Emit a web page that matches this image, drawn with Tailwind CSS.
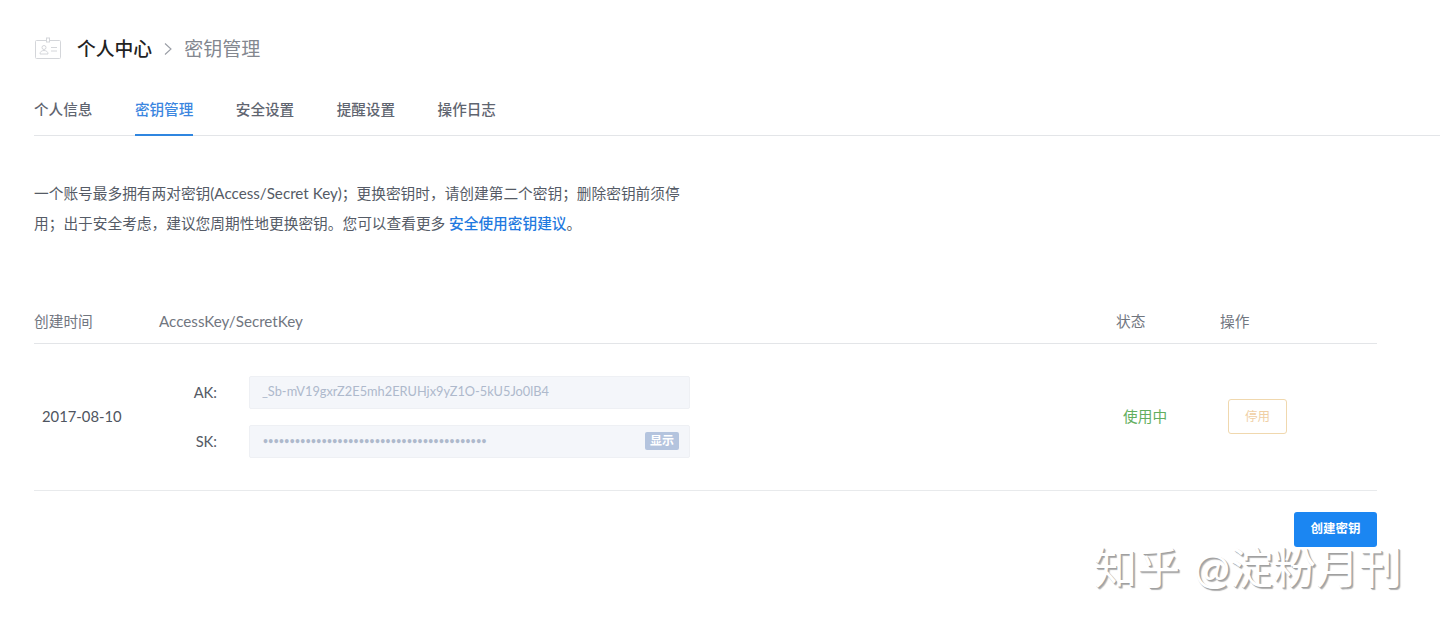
<!DOCTYPE html>
<html lang="zh">
<head>
<meta charset="utf-8">
<script src="https://cdn.jsdelivr.net/npm/@tailwindcss/browser@4"></script>
</head>
<body class="relative h-[627px] overflow-hidden bg-white font-['Lato','Noto_Sans_CJK_SC',sans-serif] text-[14.7px] text-[#5b6270]">
  <main class="pl-[34px]">
    <header class="flex h-[98px] items-center">
      <svg class="h-[24px] w-[28px]" viewBox="0 0 28 24" fill="none" stroke="#d4d6da" stroke-width="1">
        <rect x="1.5" y="3.5" width="25" height="18" rx="1"/>
        <rect x="12.5" y="1" width="3" height="4" fill="#fff"/>
        <circle cx="10" cy="10.5" r="2"/>
        <path d="M6 17c0-2.500 2-3.500 4-3.500s4 1 4 3.500zM17 10.500h6M17 14h6"/>
      </svg>
      <span class="ml-[15px] text-[18.8px] font-medium text-[#222]">个人中心</span>
      <svg class="mx-[11px] h-[14px] w-[10px]" viewBox="0 0 10 14" fill="none" stroke="#9a9ea6" stroke-width="1.100"><path d="M2 1.500 8 7l-6 5.500"/></svg>
      <span class="text-[19px] text-[#83878f]">密钥管理</span>
    </header>
    <nav class="flex h-[38px] gap-[42.5px] border-b border-[#e3e5e8] text-[14.6px] font-medium text-[#5f6570]">
      <a class="h-[38px] pt-[2px] leading-[20px]">个人信息</a>
      <a class="h-[38px] border-b-2 border-[#2f86e0] pt-[2px] leading-[20px] text-[#3b86e0]">密钥管理</a>
      <a class="h-[38px] pt-[2px] leading-[20px]">安全设置</a>
      <a class="h-[38px] pt-[2px] leading-[20px]">提醒设置</a>
      <a class="h-[38px] pt-[2px] leading-[20px]">操作日志</a>
    </nav>
    <p class="mt-[42px] w-[660px] leading-[30px] text-[#555b66]">一个账号最多拥有两对密钥<span class="text-[15.2px]">(Access/Secret Key)</span>；更换密钥时，请创建第二个密钥；删除密钥前须停用；出于安全考虑，建议您周期性地更换密钥。您可以查看更多 <a class="font-medium text-[#1f7ae0]">安全使用密钥建议</a>。</p>
    <section class="mt-[62px] w-[1343px]">
      <div class="grid h-[44px] grid-cols-[125px_957px_104px_1fr] items-center border-b border-[#e3e5e8] pb-[1px] text-[#71767f]">
        <span>创建时间</span><span class="text-[15.2px]">AccessKey/SecretKey</span><span>状态</span><span>操作</span>
      </div>
      <div class="grid h-[147px] grid-cols-[125px_957px_104px_1fr] items-center border-b border-[#e8eaec] pb-[1px]">
        <span class="pl-[8px] text-[14.8px] text-[#4f5560]">2017-08-10</span>
        <div class="flex flex-col gap-[16px]">
          <div class="flex items-center">
            <span class="w-[58px] text-right text-[#555b66]">AK:</span>
            <div class="ml-[32px] flex h-[33px] w-[441px] items-center rounded-[2px] border border-[#eef0f4] bg-[#f4f6fa] pl-[12px] text-[12.800px] text-[#aeb9cc]">_Sb-mV19gxrZ2E5mh2ERUHjx9yZ1O-5kU5Jo0lB4</div>
          </div>
          <div class="flex items-center">
            <span class="w-[58px] text-right text-[#555b66]">SK:</span>
            <div class="ml-[32px] flex h-[33px] w-[441px] items-center justify-between rounded-[2px] border border-[#eef0f4] bg-[#f4f6fa] pl-[13px] pr-[10px] text-[#aeb9cc]">
              <span class="text-[8.500px] font-bold tracking-[0.400px]">••••••••••••••••••••••••••••••••••••••••••</span>
              <span class="rounded-[2px] bg-[#b4c4de] px-[5px] text-[12px] leading-[18px] font-bold text-white">显示</span>
            </div>
          </div>
        </div>
        <span class="pl-[7px] text-[#62ae5e]">使用中</span>
        <div class="pl-[8px]"><button class="h-[35px] w-[59px] rounded-[3px] border border-[#f0d8ae] pt-[1px] text-[12.500px] text-[#f0cfa5]">停用</button></div>
      </div>
      <div class="mt-[21px] flex justify-end">
        <button class="h-[35px] w-[83px] rounded-[3px] bg-[#1b86f2] text-[12.500px] font-bold text-white">创建密钥</button>
      </div>
    </section>
  </main>
  <div class="absolute left-[1094px] top-[540px] text-[43px] leading-[56px] [word-spacing:3px] whitespace-nowrap text-white [text-shadow:1px_1px_0_#a0a0a0,2px_2px_1px_#b0b0b0]">知乎 @淀粉月刊</div>
</body>
</html>
